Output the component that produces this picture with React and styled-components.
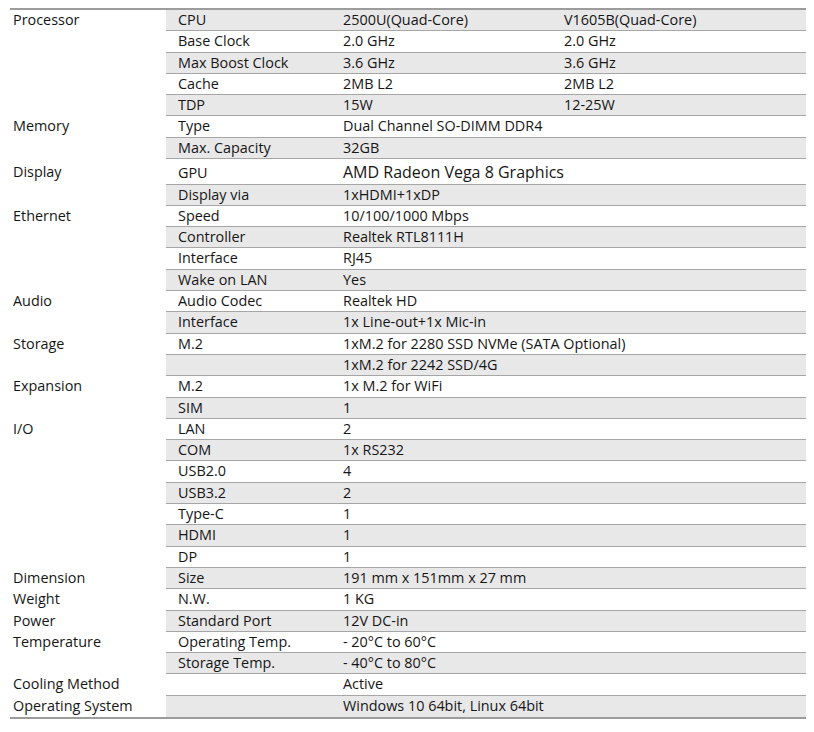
import React from "react";
import styled, { createGlobalStyle } from "styled-components";

const Global = createGlobalStyle`
  html, body { margin: 0; padding: 0; background: #ffffff; }
  body { font-family: "Open Sans", "Liberation Sans", sans-serif; color: #161616; }
`;

const Page = styled.div`
  padding: 8px 8px 0 10px;
  width: 814px;
  box-sizing: border-box;
`;

const Table = styled.div`
  width: 796px;
  border-top: 2px solid #9c9c9c;
  border-bottom: 2px solid #9c9c9c;
  display: flex;
  flex-direction: column;
`;

const Group = styled.div`
  display: grid;
  grid-template-columns: 156px 1fr;
`;

const Category = styled.div`
  font-size: 14.4px;
  line-height: 19px;
  padding-left: 3px;
  padding-top: ${(p) => (p.$tall ? "3px" : "0")};
  white-space: nowrap;
`;

const Rows = styled.div`
  display: flex;
  flex-direction: column;
`;

const Row = styled.div`
  display: grid;
  grid-template-columns: 165px 221px 1fr;
  align-items: center;
  box-sizing: border-box;
  padding-bottom: ${(p) => (p.$tall ? "0" : "2px")};
  padding-top: ${(p) => (p.$tall ? "2px" : "0")};
  height: ${(p) => (p.$tall ? "25.5px" : "21.3px")};
  background: ${(p) => (p.$shade ? "#e8e8e9" : "#ffffff")};
  border-bottom: ${(p) => (p.$last ? "none" : "1px solid #a6a6a6")};
`;

const Cell = styled.div`
  padding-left: 12px;
  font-size: ${(p) => (p.$big ? "16px" : "14.4px")};
  line-height: 19px;
  white-space: nowrap;
  grid-column: ${(p) => (p.$span ? "2 / span 2" : "auto")};
`;

const data = [
  ["Processor", [
    ["CPU", "2500U(Quad-Core)", "V1605B(Quad-Core)"],
    ["Base Clock", "2.0 GHz", "2.0 GHz"],
    ["Max Boost Clock", "3.6 GHz", "3.6 GHz"],
    ["Cache", "2MB L2", "2MB L2"],
    ["TDP", "15W", "12-25W"],
  ]],
  ["Memory", [
    ["Type", "Dual Channel SO-DIMM DDR4"],
    ["Max. Capacity", "32GB"],
  ]],
  ["Display", [
    ["GPU", "AMD Radeon Vega 8 Graphics", null, true],
    ["Display via", "1xHDMI+1xDP"],
  ]],
  ["Ethernet", [
    ["Speed", "10/100/1000 Mbps"],
    ["Controller", "Realtek RTL8111H"],
    ["Interface", "RJ45"],
    ["Wake on LAN", "Yes"],
  ]],
  ["Audio", [
    ["Audio Codec", "Realtek HD"],
    ["Interface", "1x Line-out+1x Mic-in"],
  ]],
  ["Storage", [
    ["M.2", "1xM.2 for 2280 SSD NVMe (SATA Optional)"],
    ["", "1xM.2 for 2242 SSD/4G"],
  ]],
  ["Expansion", [
    ["M.2", "1x M.2 for WiFi"],
    ["SIM", "1"],
  ]],
  ["I/O", [
    ["LAN", "2"],
    ["COM", "1x RS232"],
    ["USB2.0", "4"],
    ["USB3.2", "2"],
    ["Type-C", "1"],
    ["HDMI", "1"],
    ["DP", "1"],
  ]],
  ["Dimension", [["Size", "191 mm x 151mm x 27 mm"]]],
  ["Weight", [["N.W.", "1 KG"]]],
  ["Power", [["Standard Port", "12V DC-in"]]],
  ["Temperature", [
    ["Operating Temp.", "- 20°C to 60°C"],
    ["Storage Temp.", "- 40°C to 80°C"],
  ]],
  ["Cooling Method", [["", "Active"]]],
  ["Operating System", [["", "Windows 10 64bit, Linux 64bit"]]],
];

export default function App() {
  let idx = 0;
  const total = data.reduce((n, g) => n + g[1].length, 0);
  return (
    <Page>
      <Global />
      <Table>
        {data.map(([cat, rows]) => (
          <Group key={cat}>
            <Category $tall={!!rows[0][3]}>{cat}</Category>
            <Rows>
              {rows.map((r, i) => {
                const k = idx++;
                const [label, v1, v2, big] = r;
                return (
                  <Row key={i} $shade={k % 2 === 0} $tall={big} $last={k === total - 1}>
                    <Cell>{label}</Cell>
                    {v2 != null ? (
                      <>
                        <Cell>{v1}</Cell>
                        <Cell>{v2}</Cell>
                      </>
                    ) : (
                      <Cell $span $big={big}>{v1}</Cell>
                    )}
                  </Row>
                );
              })}
            </Rows>
          </Group>
        ))}
      </Table>
    </Page>
  );
}
